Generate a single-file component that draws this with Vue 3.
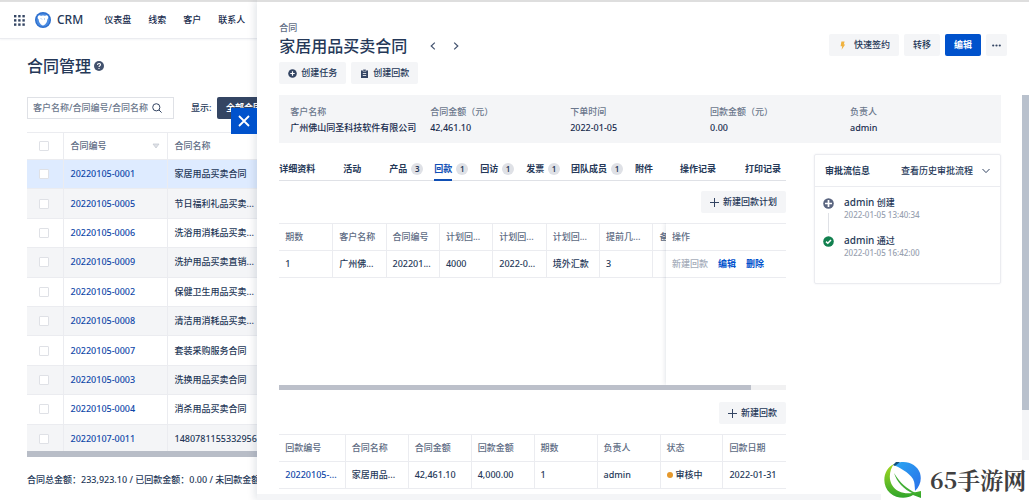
<script setup>
import { ref } from 'vue'

const nav = ['仪表盘', '线索', '客户', '联系人']

const contracts = [
  ['20220105-0001', '家居用品买卖合同'],
  ['20220105-0005', '节日福利礼品买卖...'],
  ['20220105-0006', '洗浴用消耗品买卖...'],
  ['20220105-0009', '洗护用品买卖直销...'],
  ['20220105-0002', '保健卫生用品买卖...'],
  ['20220105-0008', '清洁用消耗品买卖...'],
  ['20220105-0007', '套装采购服务合同'],
  ['20220105-0003', '洗换用品买卖合同'],
  ['20220105-0004', '消杀用品买卖合同'],
  ['20220107-0011', '1480781155332956...'],
]

const summary = [
  ['客户名称', '广州佛山同圣科技软件有限公司'],
  ['合同金额（元）', '42,461.10'],
  ['下单时间', '2022-01-05'],
  ['回款金额（元）', '0.00'],
  ['负责人', 'admin'],
]

const activeTab = ref('回款')
const tabs = [
  { name: '详细资料' },
  { name: '活动' },
  { name: '产品', count: 3 },
  { name: '回款', count: 1 },
  { name: '回访', count: 1 },
  { name: '发票', count: 1 },
  { name: '团队成员', count: 1 },
  { name: '附件' },
  { name: '操作记录' },
  { name: '打印记录' },
]

const planHead = ['期数', '客户名称', '合同编号', '计划回...', '计划回...', '计划回...', '提前几...', '备']
const planRow = ['1', '广州佛...', '202201...', '4000', '2022-0...', '境外汇款', '3', '']

const payHead = ['回款编号', '合同名称', '合同金额', '回款金额', '期数', '负责人', '状态', '回款日期']
</script>

<template>
  <div class="app">
    <div class="page">
      <header class="topbar">
        <svg class="apps" viewBox="0 0 11 11" aria-hidden="true">
          <g fill="#344563">
            <rect x="0" y="0" width="2.4" height="2.4" /><rect x="4.2" y="0" width="2.4" height="2.4" /><rect x="8.4" y="0" width="2.4" height="2.4" />
            <rect x="0" y="4.2" width="2.4" height="2.4" /><rect x="4.2" y="4.2" width="2.4" height="2.4" /><rect x="8.4" y="4.2" width="2.4" height="2.4" />
            <rect x="0" y="8.4" width="2.4" height="2.4" /><rect x="4.2" y="8.4" width="2.4" height="2.4" /><rect x="8.4" y="8.4" width="2.4" height="2.4" />
          </g>
        </svg>
        <svg class="logo" viewBox="0 0 16 16" aria-hidden="true">
          <circle cx="8" cy="8" r="8" fill="#2d6fce" />
          <circle cx="8" cy="8" r="6.6" fill="#4b8be0" />
          <path d="M3 4.2C4 2.8 5.4 3 6 3.9 7 3.3 9 3.3 10 3.9c.7-.9 2-1.100 3 .3.6 1.400.1 2.600-.6 3-.2 3-2.200 5.800-4.400 6.300C5.800 13 3.800 10.200 3.600 7.200 2.800 6.800 2.400 5.600 3 4.200z" fill="#fff" />
          <path d="M6 6.500l.8.8M10 6.500l-.8.8" stroke="#4b8be0" stroke-width=".9" />
        </svg>
        <span class="brand">CRM</span>
        <nav class="nav">
          <a v-for="item in nav" :key="item" href="#">{{ item }}</a>
        </nav>
      </header>

      <main class="list">
        <h1 class="list-title">
          合同管理
          <svg viewBox="0 0 10 10" aria-hidden="true">
            <circle cx="5" cy="5" r="5" fill="#42526e" />
            <path d="M3.500 4c0-2 3-2 3-.2C6.500 4.800 5 4.800 5 6M5 7v1" fill="none" stroke="#fff" stroke-width="1.100" />
          </svg>
        </h1>

        <div class="filters">
          <label class="search">
            <input type="text" placeholder="客户名称/合同编号/合同名称" aria-label="搜索合同" />
            <svg viewBox="0 0 10 10" aria-hidden="true">
              <circle cx="4.300" cy="4.300" r="3.600" fill="none" stroke="#344563" />
              <path d="M7 7l2.600 2.600" stroke="#344563" />
            </svg>
          </label>
          <span class="show">显示:</span>
          <button type="button" class="scope">全部合同</button>
        </div>

        <table class="contracts">
          <colgroup><col class="c-check" /><col class="c-no" /><col /></colgroup>
          <thead>
            <tr>
              <th><input type="checkbox" aria-label="全选" /></th>
              <th>
                <div class="sortable">
                  合同编号
                  <svg viewBox="0 0 8 6" aria-hidden="true"><path d="M1 1h6L4 5z" fill="#dfe1e6" stroke="#c1c7d0" stroke-width=".7" /></svg>
                </div>
              </th>
              <th>合同名称</th>
            </tr>
          </thead>
          <tbody>
            <tr v-for="(row, i) in contracts" :key="row[0]" :class="{ current: i === 0 }">
              <td><input type="checkbox" :aria-label="row[0]" /></td>
              <td><a href="#">{{ row[0] }}</a></td>
              <td>{{ row[1] }}</td>
            </tr>
          </tbody>
        </table>
        <div class="list-scroll"></div>
        <p class="totals">合同总金额：233,923.10 / 已回款金额：0.00 / 未回款金额</p>
      </main>
    </div>

    <section class="drawer">
      <button type="button" class="close" aria-label="关闭">
        <svg viewBox="0 0 12 12" aria-hidden="true"><path d="M1 1l10 10M11 1L1 11" stroke="#fff" stroke-width="1.800" /></svg>
      </button>

      <header class="head">
        <div>
          <div class="kind">合同</div>
          <div class="title-row">
            <h2>家居用品买卖合同</h2>
            <button type="button" class="step" aria-label="上一条">
              <svg viewBox="0 0 6 8" aria-hidden="true"><path d="M4.800.6L1.200 4l3.600 3.400" fill="none" stroke="#42526e" stroke-width="1.200" /></svg>
            </button>
            <button type="button" class="step" aria-label="下一条">
              <svg viewBox="0 0 6 8" aria-hidden="true"><path d="M1.200.6L4.800 4 1.200 7.400" fill="none" stroke="#42526e" stroke-width="1.200" /></svg>
            </button>
          </div>
          <div class="row">
            <button type="button" class="btn">
              <svg viewBox="0 0 9 9" aria-hidden="true"><circle cx="4.500" cy="4.500" r="4.300" fill="#344563" /><path d="M4.500 2.300v4.400M2.300 4.500h4.400" stroke="#fff" stroke-width="1.200" /></svg>
              创建任务
            </button>
            <button type="button" class="btn">
              <svg viewBox="0 0 9 9" aria-hidden="true"><path d="M1 1.400h7V9H1z" fill="#344563" /><path d="M3 .3h3v2H3z" fill="#344563" stroke="#f4f5f7" stroke-width=".5" /><path d="M2.800 4.500h3.400M2.800 6.500h3.400" stroke="#fff" stroke-width=".8" /></svg>
              创建回款
            </button>
          </div>
        </div>
        <div class="row actions">
          <button type="button" class="btn quick">
            <svg viewBox="0 0 9 9" aria-hidden="true"><path d="M3.400.5h3.200L5.800 3.400h1.400L3.600 8.800l.6-3.600H2.600z" fill="#f0b23e" /></svg>
            快速签约
          </button>
          <button type="button" class="btn">转移</button>
          <button type="button" class="btn primary">编辑</button>
          <button type="button" class="btn more" aria-label="更多">
            <svg viewBox="0 0 9 9" aria-hidden="true"><g fill="#344563"><circle cx="1.200" cy="4.500" r="1.100" /><circle cx="4.500" cy="4.500" r="1.100" /><circle cx="7.800" cy="4.500" r="1.100" /></g></svg>
          </button>
        </div>
      </header>

      <div class="body">
        <dl class="summary">
          <div v-for="item in summary" :key="item[0]">
            <dt>{{ item[0] }}</dt>
            <dd>{{ item[1] }}</dd>
          </div>
        </dl>

        <div class="columns">
          <div class="main">
            <nav class="tabs">
              <button
                v-for="tab in tabs"
                :key="tab.name"
                type="button"
                :class="{ active: tab.name === activeTab }"
                @click="activeTab = tab.name"
              >
                <span class="name">{{ tab.name }}</span>
                <span v-if="tab.count" class="badge">{{ tab.count }}</span>
              </button>
            </nav>

            <div class="tool">
              <button type="button" class="btn">
                <svg viewBox="0 0 9 9" aria-hidden="true"><path d="M4.500 0v9M0 4.500h9" stroke="#344563" /></svg>
                新建回款计划
              </button>
            </div>

            <div class="plan">
              <div class="plan-left">
                <table class="grid">
                  <thead><tr><th v-for="(h, i) in planHead" :key="i">{{ h }}</th></tr></thead>
                  <tbody><tr><td v-for="(c, i) in planRow" :key="i">{{ c }}</td></tr></tbody>
                </table>
              </div>
              <div class="plan-right">
                <table class="grid">
                  <thead><tr><th>操作</th></tr></thead>
                  <tbody>
                    <tr>
                      <td>
                        <div class="ops">
                          <span>新建回款</span><a href="#">编辑</a><a href="#">删除</a>
                        </div>
                      </td>
                    </tr>
                  </tbody>
                </table>
              </div>
            </div>
            <div class="hscroll"><div></div></div>

            <div class="tool">
              <button type="button" class="btn">
                <svg viewBox="0 0 9 9" aria-hidden="true"><path d="M4.500 0v9M0 4.500h9" stroke="#344563" /></svg>
                新建回款
              </button>
            </div>

            <table class="grid pays">
              <thead><tr><th v-for="h in payHead" :key="h">{{ h }}</th></tr></thead>
              <tbody>
                <tr>
                  <td><a href="#">20220105-...</a></td>
                  <td>家居用品...</td>
                  <td>42,461.10</td>
                  <td>4,000.00</td>
                  <td>1</td>
                  <td>admin</td>
                  <td><div class="status"><i></i>审核中</div></td>
                  <td>2022-01-31</td>
                </tr>
              </tbody>
            </table>
          </div>

          <aside class="flow">
            <div class="flow-head">
              <strong>审批流信息</strong>
              <button type="button">
                查看历史审批流程
                <svg viewBox="0 0 8 6" aria-hidden="true"><path d="M.5 1L4 4.600 7.500 1" fill="none" stroke="#344563" /></svg>
              </button>
            </div>
            <ol>
              <li>
                <svg viewBox="0 0 11 11" aria-hidden="true"><circle cx="5.500" cy="5.500" r="5.300" fill="#5a6580" /><path d="M5.500 2v7M2 5.500h7" stroke="#fff" stroke-width="1.700" /></svg>
                <div><p><b>admin</b> 创建</p><time>2022-01-05 13:40:34</time></div>
              </li>
              <li>
                <svg viewBox="0 0 11 11" aria-hidden="true"><circle cx="5.500" cy="5.500" r="5.300" fill="#12804f" /><path d="M3 5.600l1.800 1.700L8 4" fill="none" stroke="#fff" stroke-width="1.500" /></svg>
                <div><p><b>admin</b> 通过</p><time>2022-01-05 16:42:00</time></div>
              </li>
            </ol>
          </aside>
        </div>
      </div>
      <div class="vscroll"><div></div></div>
    </section>

    <div class="mark">
      <svg viewBox="0 0 38 38" aria-hidden="true">
        <defs>
          <linearGradient id="leaf" x1="0" y1="0" x2="0" y2="1"><stop offset="0" stop-color="#a4d820" /><stop offset="1" stop-color="#2fa52c" /></linearGradient>
          <linearGradient id="drop" x1="0" y1="0" x2="1" y2="1"><stop offset="0" stop-color="#2aa6f2" /><stop offset="1" stop-color="#2b6fe8" /></linearGradient>
        </defs>
        <path d="M10 3C-1 8-3 24 6 32c7 6 17 6 23 2l8 3V30l-9 2C20 33 12 31 8 24 4 17 6 8 10 3z" fill="url(#leaf)" />
        <path d="M11 3C21-2 33 3 36 12c2 7 0 13-5 18 0-6-3-10-8-14C17 11 11 9 11 3z" fill="url(#drop)" />
        <path d="M10 4c4 2 15 7 19 14 2 4 2 8 1 12C20 27 10 17 10 4z" fill="#fff" />
        <path d="M10 12c3 9 9 16 20 21l2-1c-9-4-16-10-22-20z" fill="#42ae35" />
        <path d="M9 4l3-3 4 0-5 4z" fill="#15527a" />
      </svg>
      <span>65手游网</span>
    </div>
  </div>
</template>

<style>
body {
  margin: 0;
}
</style>

<style scoped>
.app {
  position: relative;
  min-height: 100vh;
  overflow: hidden;
  background: #fff;
  color: #253858;
  font: 500 9px/12px "Noto Sans", "Noto Sans CJK SC", sans-serif;
}
.app * {
  box-sizing: border-box;
}
button,
input {
  margin: 0;
  padding: 0;
  border: 0;
  background: none;
  color: inherit;
  font: inherit;
}
button {
  white-space: nowrap;
  cursor: pointer;
}
a {
  color: #0f47a8;
  text-decoration: none;
}
svg {
  display: block;
  flex: none;
}
p,
h1,
h2,
dl,
dd,
ol {
  margin: 0;
  padding: 0;
}
.page {
  border-top: 2px solid #dedede;
}
.topbar {
  display: flex;
  align-items: center;
  height: 37px;
  padding-left: 14px;
  border-bottom: 1px solid #ebecf0;
  box-shadow: 0 1px 2px #f4f5f7;
}
.apps {
  width: 11px;
  height: 11px;
}
.logo {
  width: 16px;
  height: 16px;
  margin: 0 6px 0 10px;
}
.brand {
  font-size: 12px;
}
.nav {
  display: flex;
  gap: 17px;
  margin-left: 21px;
}
.nav a {
  color: #172b4d;
}
.list {
  padding: 16px 0 0 27px;
}
.list-title {
  display: flex;
  align-items: center;
  gap: 3px;
  font-size: 16px;
  font-weight: 500;
  line-height: 22px;
}
.list-title svg {
  width: 10px;
  height: 10px;
}
.filters {
  display: flex;
  align-items: center;
  margin: 20px 0 13px;
}
.search {
  display: flex;
  align-items: center;
  gap: 3px;
  width: 147px;
  height: 22px;
  padding: 0 11px 0 5px;
  border: 1px solid #dfe1e6;
}
.search input {
  flex: 1;
  min-width: 0;
  outline: 0;
}
.search input::placeholder {
  color: #6b778c;
  opacity: 1;
}
.search svg {
  width: 10px;
  height: 10px;
}
.show {
  width: 26px;
  margin-left: 17px;
}
.scope {
  height: 22px;
  padding: 0 9px;
  border-radius: 2px;
  background: #344563;
  color: #fff;
  font-weight: 700;
}
table {
  border-collapse: collapse;
  table-layout: fixed;
}
th {
  color: #5e6c84;
  font-weight: 500;
  text-align: left;
}
.contracts {
  width: 277px;
  height: 322px;
}
.c-check {
  width: 36px;
}
.c-no {
  width: 104px;
}
.contracts th,
.contracts td {
  padding: 0 7px;
  border: 1px solid #ebecf0;
  border-left: 0;
  white-space: nowrap;
}
.contracts th {
  height: 27px;
}
.contracts tbody tr:nth-child(even) {
  background: #f4f5f7;
}
.contracts tbody .current {
  background: #deebff;
}
.contracts th:first-child,
.contracts td:first-child {
  padding: 0 0 0 12px;
}
.contracts input {
  display: block;
  width: 10px;
  height: 10px;
  border: 1px solid #dfe1e6;
  border-radius: 1px;
  background: #fff;
  appearance: none;
}
.sortable {
  display: flex;
  align-items: center;
  justify-content: space-between;
}
.sortable svg {
  width: 8px;
  height: 6px;
}
.list-scroll {
  position: relative;
  height: 6px;
  margin-top: -3px;
  background: #b8bdc7;
}
.totals {
  margin-top: 17px;
  white-space: nowrap;
}
.drawer {
  position: absolute;
  top: 0;
  right: 0;
  bottom: 0;
  left: 25%;
  display: flex;
  flex-direction: column;
  border-top: 2px solid #dedede;
  border-bottom: 6px solid #f4f5f7;
  background: #fff;
  box-shadow: -2px 0 8px rgba(9, 30, 66, 0.12);
}
.close {
  position: absolute;
  top: 106px;
  right: 100%;
  display: grid;
  place-items: center;
  width: 26px;
  height: 26px;
  background: #0052cc;
}
.close svg {
  width: 12px;
  height: 12px;
}
.head {
  display: flex;
  justify-content: space-between;
  padding: 20px 22px 11px 22px;
}
.kind {
  color: #5e6c84;
}
.title-row {
  display: flex;
  align-items: center;
  margin-bottom: 4px;
}
h2 {
  margin-right: 23px;
  font-size: 16px;
  font-weight: 500;
  line-height: 24px;
}
.step {
  margin-right: 17px;
}
.step svg {
  width: 6px;
  height: 8px;
}
.row {
  display: flex;
  gap: 5px;
}
.actions {
  align-items: flex-start;
  padding-top: 12px;
}
.btn {
  display: flex;
  align-items: center;
  gap: 4px;
  height: 22px;
  padding: 0 9px;
  border-radius: 2px;
  background: #f4f5f7;
  color: #253858;
}
.btn svg {
  width: 9px;
  height: 9px;
}
.btn.quick {
  gap: 7px;
}
.btn.more {
  padding: 0 6px;
}
.btn.primary {
  background: #0052cc;
  color: #fff;
  font-weight: 700;
}
.body {
  padding: 0 28px 0 22px;
}
.summary {
  display: grid;
  grid-template-columns: repeat(5, 1fr);
  height: 48px;
  padding: 11px 11px 9px;
  background: #f4f5f7;
}
.summary div {
  white-space: nowrap;
}
.summary dt {
  margin-bottom: 4px;
  color: #6b778c;
}
.summary dd {
  color: #172b4d;
}
.columns {
  display: flex;
  align-items: flex-start;
  gap: 28px;
  padding-top: 11px;
}
.main {
  flex: 1;
  min-width: 0;
}
.tabs {
  display: grid;
  grid-template-columns: 64fr 46fr 45fr 46fr 46fr 45fr 64fr 45fr 65fr 41fr;
  height: 27px;
  border-bottom: 1px solid #dfe1e6;
}
.tabs button {
  display: flex;
  align-items: center;
  gap: 4px;
  font-weight: 600;
}
.tabs .name {
  height: 27px;
  padding-top: 9px;
}
.tabs .active .name {
  border-bottom: 2px solid #0f4fb5;
  color: #0f4fb5;
}
.badge {
  width: 12px;
  height: 12px;
  margin-top: 3px;
  border-radius: 6px;
  background: #dfe1e6;
  font-size: 8px;
}
.tool {
  display: flex;
  justify-content: flex-end;
  padding: 10px 0;
}
.plan {
  display: flex;
  height: 162px;
  overflow: hidden;
}
.plan-left {
  flex: 1;
  overflow: hidden;
}
.plan-left .grid {
  width: 427px;
}
.plan-right {
  width: 120px;
  box-shadow: 0 0 5px rgba(9, 30, 66, 0.16);
}
.grid {
  width: 100%;
}
.grid th,
.grid td {
  height: 27px;
  padding: 0 6px;
  border: 1px solid #ebecf0;
  border-width: 1px 1px 1px 0;
  white-space: nowrap;
}
.grid th:last-child,
.grid td:last-child {
  border-right: 0;
}
.pays th:first-child {
  width: 66px;
}
.ops {
  display: flex;
  gap: 10px;
  color: #a5adba;
}
.ops a {
  color: #0052cc;
  font-weight: 700;
}
.hscroll {
  height: 5px;
  background: #f1f1f2;
}
.hscroll div {
  width: 93%;
  height: 5px;
  background: #bcc0ca;
}
.hscroll + .tool {
  padding-top: 12px;
}
.status {
  display: flex;
  align-items: center;
  gap: 3px;
}
.status i {
  width: 6px;
  height: 6px;
  border-radius: 3px;
  background: #e5982c;
}
.flow {
  width: 187px;
  height: 130px;
  border: 1px solid #ebecf0;
  border-radius: 2px;
  box-shadow: 0 0 2px #ebecf0;
}
.flow-head {
  display: flex;
  align-items: center;
  justify-content: space-between;
  height: 32px;
  padding: 0 10px;
  border-bottom: 1px solid #ebecf0;
}
.flow-head strong {
  font-weight: 600;
}
.flow-head button {
  display: flex;
  align-items: center;
  gap: 9px;
}
.flow-head svg {
  width: 8px;
  height: 6px;
}
.flow ol {
  padding: 9px 8px;
  list-style: none;
}
.flow li {
  position: relative;
  display: flex;
  gap: 10px;
  height: 38px;
}
.flow li svg {
  width: 11px;
  height: 11px;
  margin-top: 2px;
}
.flow li:first-child::before {
  content: "";
  position: absolute;
  top: 17px;
  left: 5px;
  width: 1px;
  height: 20px;
  background: #dfe1e6;
}
.flow b {
  font-size: 10px;
  font-weight: 500;
}
.flow time {
  display: block;
  color: #97a0af;
  font-size: 8px;
}
.vscroll {
  position: absolute;
  top: 93px;
  right: 0;
  bottom: 0;
  width: 7px;
  background: #f4f5f7;
}
.vscroll div {
  height: 79%;
  background: #b9c1cd;
}
.mark {
  position: absolute;
  right: 0;
  bottom: 0;
  display: flex;
  align-items: center;
  gap: 8px;
  width: 148px;
  height: 40px;
  padding-left: 3px;
  background: #fff;
  color: #3f3f41;
  font: 700 23px/32px "Noto Serif CJK SC", "Liberation Serif", "Noto Sans CJK SC", serif;
  white-space: nowrap;
}
.mark svg {
  width: 38px;
  height: 38px;
}
</style>
